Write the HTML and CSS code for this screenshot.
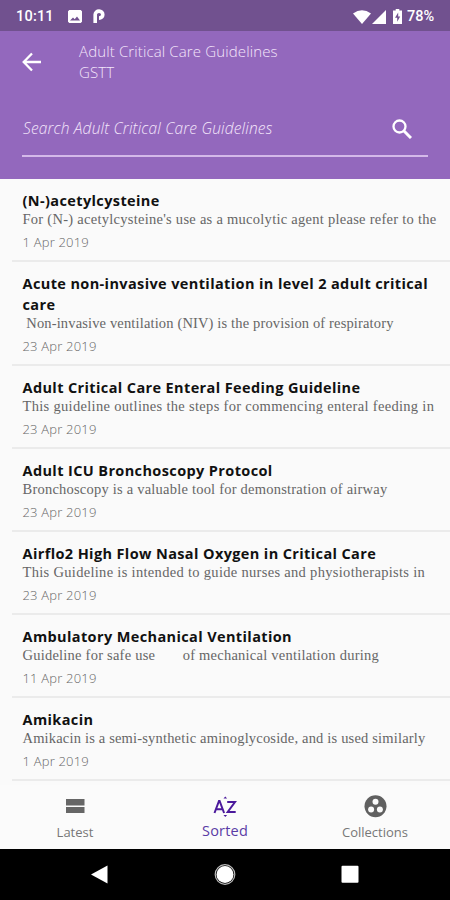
FILE: index.html
```
<!DOCTYPE html>
<html lang="en">

<head>
  <meta charset="UTF-8" />
  <title>Adult Critical Care Guidelines</title>
  <meta name="viewport" content="width=device-width, initial-scale=1.0" />
  <link rel="stylesheet" href="styles.css">
</head>

<body>

  <div class="status-bar">
    <span class="clock">10:11</span>
    <svg class="icon-image" width="14" height="13" viewBox="0 0 14 13">
      <path fill="#fff" fill-rule="evenodd" d="M1.3 0h11.4L14 1.3v10.4L12.7 13H1.3L0 11.700V1.300zM2 10.500h10L9 6.500 6.700 9.200 5 7.500z" />
    </svg>
    <svg class="icon-p" width="12" height="15" viewBox="0 0 12 15">
      <path fill="none" stroke="#fff" stroke-width="3.600" d="M2.200 14V5.500a3.800 3.500 0 1 1 3.800 3.600" />
    </svg>
    <svg class="icon-wifi" width="18" height="14" viewBox="0 0 18 14">
      <path fill="#fff" d="M0 3.500Q9-3 18 3.500L9 14z" />
    </svg>
    <svg class="icon-signal" width="14" height="14" viewBox="0 0 14 14">
      <path fill="#fff" d="M14 0v14H0z" />
    </svg>
    <svg class="icon-battery" width="9" height="15" viewBox="0 0 9 15">
      <path fill="#fff" d="M2.700 0h3.600v1.500H9V15H0V1.500h2.700z" />
      <path fill="#71518f" d="M5.200 3.500L2 8.800h2.200v4L7.200 7.500H5.200z" />
    </svg>
    <span class="battery">78%</span>
  </div>

  <div class="header">
    <div class="toolbar">
      <svg class="back" width="20" height="20" viewBox="0 0 20 20">
        <path fill="none" stroke="#fff" stroke-width="2.300" d="M19 10H2.500M10 1.500L1.700 10l8.300 8.500" />
      </svg>
      <div class="heading">
        <h1>Adult Critical Care Guidelines</h1>
        <p>GSTT</p>
      </div>
    </div>
    <div class="search">
      <span class="placeholder">Search Adult Critical Care Guidelines</span>
      <svg width="20" height="20" viewBox="0 0 20 20">
        <circle cx="7.500" cy="7.500" r="6" fill="none" stroke="#fff" stroke-width="2.300" />
        <path stroke="#fff" stroke-width="3" d="M12 12l7 7" />
      </svg>
    </div>
  </div>

  <div class="list">
    <div class="item">
      <h2>(N-)acetylcysteine</h2>
      <p class="summary s1">For (N-) acetylcysteine's use as a mucolytic agent please refer to the</p>
      <p class="date">1 Apr 2019</p>
    </div>
    <div class="item tall">
      <h2>Acute non-invasive ventilation in level 2 adult critical care</h2>
      <p class="summary s2">&nbsp;Non-invasive ventilation (NIV) is the provision of respiratory</p>
      <p class="date">23 Apr 2019</p>
    </div>
    <div class="item">
      <h2>Adult Critical Care Enteral Feeding Guideline</h2>
      <p class="summary s3">This guideline outlines the steps for commencing enteral feeding in</p>
      <p class="date">23 Apr 2019</p>
    </div>
    <div class="item">
      <h2>Adult ICU Bronchoscopy Protocol</h2>
      <p class="summary s4">Bronchoscopy is a valuable tool for demonstration of airway</p>
      <p class="date">23 Apr 2019</p>
    </div>
    <div class="item">
      <h2>Airflo2 High Flow Nasal Oxygen in Critical Care</h2>
      <p class="summary s5">This Guideline is intended to guide nurses and physiotherapists in</p>
      <p class="date">23 Apr 2019</p>
    </div>
    <div class="item">
      <h2>Ambulatory Mechanical Ventilation</h2>
      <p class="summary s6">Guideline for safe use<span class="gap"></span>of mechanical ventilation during</p>
      <p class="date">11 Apr 2019</p>
    </div>
    <div class="item">
      <h2>Amikacin</h2>
      <p class="summary s7">Amikacin is a semi-synthetic aminoglycoside, and is used similarly</p>
      <p class="date">1 Apr 2019</p>
    </div>
  </div>

  <div class="tabs">
    <div class="tab">
      <svg width="24" height="24" viewBox="0 0 24 24">
        <path fill="#666" d="M3 5h18.500v6.500H3zM3 13h18.500v6H3z" />
      </svg>
      <span>Latest</span>
    </div>
    <div class="tab active">
      <svg width="26" height="24" viewBox="0 0 26 24">
        <path fill="none" stroke="#4b1a9c" stroke-width="2" d="M2.500 19L7 7h.6L12.100 19M4 15.200h6.700M15.200 8h7.800l-7.300 10h8" />
        <path fill="#4b1a9c" d="M11.500 4.500l1.800-2L15.100 4.500zM11.500 21h3.600l-1.800 2z" />
      </svg>
      <span>Sorted</span>
    </div>
    <div class="tab">
      <svg width="24" height="24" viewBox="0 0 24 24">
        <circle cx="12.500" cy="12.300" r="11" fill="#606060" />
        <g fill="#fafafa">
          <circle cx="12.500" cy="7.800" r="3" />
          <circle cx="8.100" cy="15.600" r="3" />
          <circle cx="16.900" cy="15.600" r="3" />
        </g>
      </svg>
      <span>Collections</span>
    </div>
  </div>

  <div class="nav-bar">
    <div class="nav-button">
      <svg width="22" height="22" viewBox="0 0 22 22">
        <path fill="#fff" d="M2 10.500L18.500 1.500v18z" />
      </svg>
    </div>
    <div class="nav-button">
      <svg width="22" height="22" viewBox="0 0 22 22">
        <circle cx="11" cy="10.500" r="9.800" fill="none" stroke="#bbb" stroke-width="1.200" />
        <circle cx="11" cy="10.500" r="8.500" fill="#fff" />
      </svg>
    </div>
    <div class="nav-button">
      <svg width="22" height="22" viewBox="0 0 22 22">
        <rect x="2.500" y="1.700" width="17" height="17" rx="1" fill="#fff" />
      </svg>
    </div>
  </div>

</body>

</html>
```
FILE: styles.css
```
* {
  margin: 0;
  padding: 0;
  box-sizing: border-box;
}

body {
  width: 450px;
  height: 900px;
  display: flex;
  flex-direction: column;
  overflow: hidden;
  background: #fafafa;
  font-family: "Open Sans", "Noto Sans", sans-serif;
  white-space: nowrap;
}

svg {
  display: block;
  flex: none;
}

.status-bar {
  height: 31px;
  flex: none;
  display: flex;
  align-items: center;
  padding: 2px 15px 0 16px;
  background: #71518f;
  color: #fff;
  font-family: Roboto, sans-serif;
  font-size: 14.5px;
  font-weight: 500;
}

.clock {
  width: 52px;
  letter-spacing: 0.2px;
}

.icon-p {
  margin-left: 11px;
}

.icon-wifi {
  margin-left: auto;
}

.icon-signal {
  margin-left: 1px;
}

.icon-battery {
  margin: 0 5px 0 7px;
}

.battery {
  width: 28px;
}

.header {
  height: 148px;
  flex: none;
  background: #9368bd;
  color: #f3e6fb;
  font-weight: 300;
}

.toolbar {
  height: 62px;
  display: flex;
  align-items: center;
  padding-left: 22px;
}

.heading {
  margin-left: 37px;
}

.heading h1,
.heading p {
  font-size: 15px;
  line-height: 21px;
  font-weight: 300;
  letter-spacing: 0.13px;
}

.search {
  height: 64px;
  margin: 0 22px;
  padding: 0 16px 0 1px;
  display: flex;
  align-items: center;
  justify-content: space-between;
  border-bottom: 2px solid #d4b9e9;
}

.search .placeholder {
  margin-top: 8px;
  font-size: 15.5px;
  font-style: italic;
  letter-spacing: 0.17px;
}

.search svg {
  margin-top: 10px;
}

.list {
  height: 606px;
  flex: none;
  overflow: hidden;
}

.item {
  height: 83px;
  margin-left: 12px;
  padding: 11px 10px 0 10.5px;
  border-bottom: 2px solid #ebebeb;
}

.item.tall {
  height: 104px;
}

.item h2 {
  color: #111;
  font-size: 14.5px;
  line-height: 21px;
  font-weight: 700;
  letter-spacing: 0.38px;
  white-space: normal;
}

.summary {
  height: 18px;
  color: #666;
  font-family: "Liberation Serif", serif;
  font-size: 14.5px;
  line-height: 16px;
}

.s1 {
  letter-spacing: 0.27px;
}

.s2 {
  letter-spacing: 0.15px;
}

.s3,
.s5 {
  letter-spacing: 0.31px;
}

.s4 {
  letter-spacing: 0.22px;
}

.s6 {
  letter-spacing: 0.23px;
}

.s7 {
  letter-spacing: 0.18px;
}

.gap {
  display: inline-block;
  width: 27.5px;
}

.date {
  margin-top: 3px;
  color: #666;
  font-size: 13px;
  line-height: 20px;
  font-weight: 300;
  letter-spacing: 0.2px;
}

.tabs {
  height: 64px;
  flex: none;
  display: flex;
  background: #fbfbfb;
}

.tab {
  flex: 1;
  display: flex;
  flex-direction: column;
  align-items: center;
  padding-top: 9px;
  color: #777;
  font-size: 13px;
}

.tab span {
  margin-top: 5px;
  line-height: 18px;
}

.tab.active {
  color: #5a3ba5;
  font-size: 14.5px;
}

.tab.active span {
  margin-top: 4px;
  letter-spacing: 0.2px;
}

.nav-bar {
  height: 51px;
  flex: none;
  display: flex;
  padding: 0 38px;
  background: #000;
}

.nav-button {
  flex: 1;
  display: flex;
  align-items: center;
  justify-content: center;
}
```
